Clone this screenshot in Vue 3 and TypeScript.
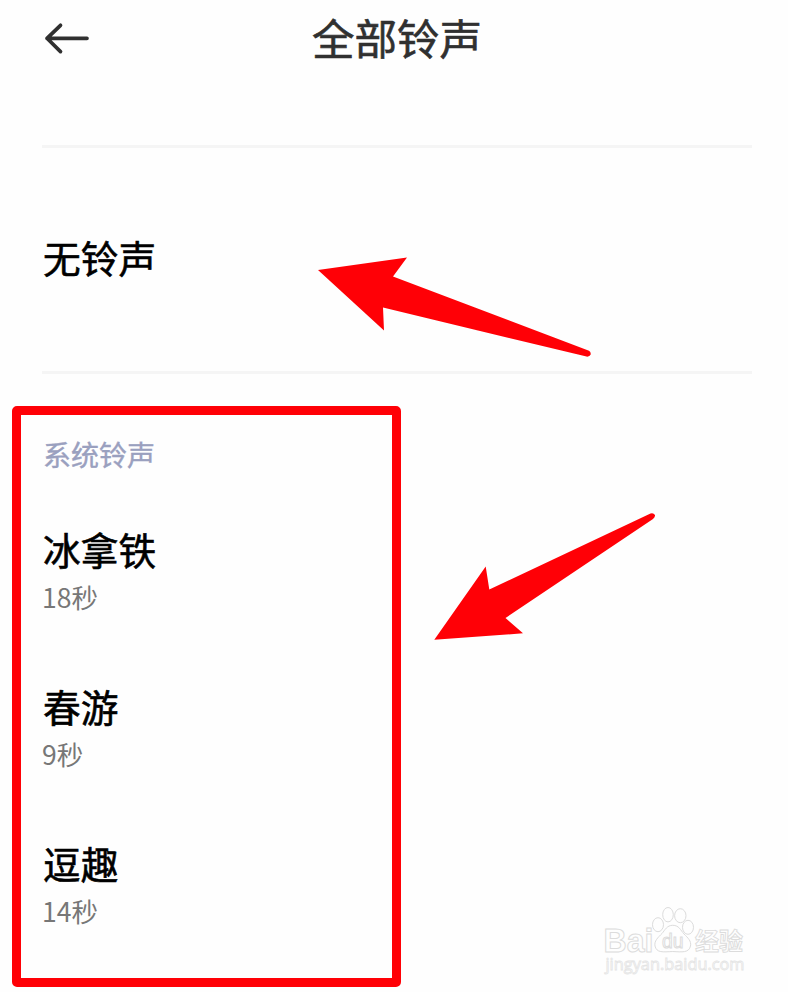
<script setup lang="ts">
interface Ringtone {
  name: string
  duration: string
}

const ringtones: Ringtone[] = [
  { name: '冰拿铁', duration: '18秒' },
  { name: '春游', duration: '9秒' },
  { name: '逗趣', duration: '14秒' },
]
</script>

<template>
  <main class="page">
    <header class="header">
      <svg class="back" width="48" height="34" viewBox="0 0 48 34" aria-label="返回">
        <path d="M18.5 3.3 5 16.3 18.5 29.6M5 16.3H45" />
      </svg>
      <h1 class="title">全部铃声</h1>
    </header>

    <section class="none-row">
      <span class="name">无铃声</span>
    </section>

    <section class="system">
      <h2 class="group">系统铃声</h2>
      <ul class="list">
        <li v-for="tone in ringtones" :key="tone.name" class="item">
          <span class="name">{{ tone.name }}</span>
          <span class="duration">{{ tone.duration }}</span>
        </li>
      </ul>
    </section>

    <div class="frame"></div>
    <svg class="arrows" width="788" height="992" viewBox="0 0 788 992">
      <path d="M318 270 407 257.5 393 276.5 589 350.8Q591 352 590.7 354.5 589.5 357 586.5 356.6L383 307.5 384 330.5Z" />
      <path d="M434.3 639.8 485.7 566.5 489.3 589.5 650.5 513.5Q653.5 512.6 655 515 655.3 517.3 653 519L505.5 618 523 633.3Z" />
    </svg>

    <svg class="watermark" width="160" height="80" viewBox="0 0 160 80">
      <text class="bai" x="1.5" y="51.5" textLength="50" lengthAdjust="spacingAndGlyphs">Bai</text>
      <ellipse cx="56" cy="24.7" rx="5.5" ry="7" />
      <ellipse cx="66" cy="14.7" rx="5.3" ry="7.2" />
      <ellipse cx="78.3" cy="15.7" rx="5.7" ry="7" />
      <ellipse cx="86" cy="27.3" rx="5.5" ry="7" />
      <path d="M70.7 25.3C65 25.3 63 30 60 33.5 56 37.5 52 41 53 46 54.5 53 61 52 70.7 51.5 80 52 87 53 88.5 46 89.5 41 86 38 82 34 78.5 30 77 25.3 70.7 25.3Z" />
      <text class="du" x="60" y="48" textLength="21.5" lengthAdjust="spacingAndGlyphs">du</text>
      <text class="jy" x="93" y="50" textLength="48" lengthAdjust="spacingAndGlyphs">经验</text>
      <text class="site" x="3.5" y="69.5" textLength="139" lengthAdjust="spacingAndGlyphs">jingyan.baidu.com</text>
    </svg>
  </main>
</template>

<style>
body {
  background: #fefefe;
}
</style>

<style scoped>
.page {
  position: relative;
  box-sizing: border-box;
  width: 788px;
  height: 992px;
  padding: 0 36px 0 42px;
  overflow: hidden;
  background: #fefefe;
  color: #000;
  font-family: "Noto Sans CJK SC", sans-serif;
}

.header {
  display: grid;
  grid-template-columns: 48px 1fr 48px;
  align-items: start;
  height: 145px;
  border-bottom: 3px solid #f5f5f5;
}

.back {
  margin-top: 22px;
  fill: none;
  stroke: #303030;
  stroke-width: 3.7;
  stroke-linecap: round;
  stroke-linejoin: round;
}

.title {
  margin: 7px 0 0;
  color: #303030;
  font-size: 42.5px;
  font-weight: 400;
  line-height: 60px;
  text-align: center;
  -webkit-text-stroke: 0.6px #303030;
}

.none-row {
  display: flex;
  align-items: center;
  box-sizing: border-box;
  height: 226px;
  padding-bottom: 5px;
  border-bottom: 3px solid #f5f5f5;
}

.name {
  margin-left: 1px;
  font-size: 37.7px;
  font-weight: 400;
  line-height: 50px;
  -webkit-text-stroke: 0.6px #000;
}

.system {
  padding-top: 60px;
}

.group {
  margin: 0 0 0 1px;
  color: #9aa0bf;
  font-size: 28px;
  font-weight: 400;
  line-height: 40px;
  -webkit-text-stroke: 0.4px #9aa0bf;
}

.list {
  display: flex;
  flex-direction: column;
  margin: 50px 0 0;
  padding: 0;
  list-style: none;
}

.item {
  display: flex;
  flex-direction: column;
  height: 157px;
}

.duration {
  margin-top: 1px;
  color: #777;
  font-size: 26.5px;
  line-height: 44px;
}

.frame {
  position: absolute;
  top: 406px;
  left: 12px;
  box-sizing: border-box;
  width: 389px;
  height: 581px;
  border: 9px solid #ff0006;
  border-radius: 5px;
}

.arrows {
  position: absolute;
  top: 0;
  left: 0;
  fill: #ff0006;
}

.watermark {
  position: absolute;
  top: 900px;
  left: 602px;
  fill: #fefefe;
  stroke: #dcdcdc;
  stroke-width: 1;
}

.bai {
  font: 700 33px "Liberation Sans", sans-serif;
}

.du {
  font: 400 20px "Liberation Sans", sans-serif;
}

.jy {
  font: 700 24px "Noto Sans CJK SC", sans-serif;
  stroke-width: 0.9;
}

.site {
  font: 400 16.5px "Open Sans", sans-serif;
  stroke: #e4e4e4;
  stroke-width: 0.8;
}
</style>
